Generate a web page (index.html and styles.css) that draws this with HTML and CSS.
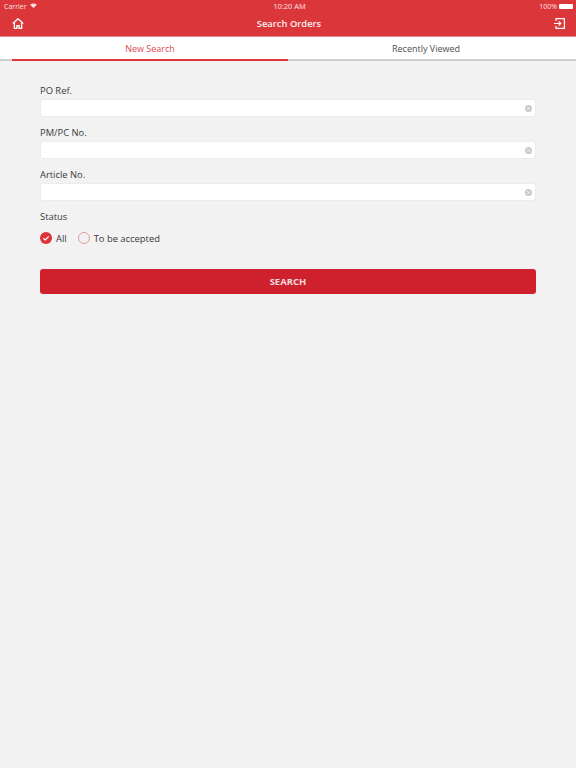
FILE: index.html
```html
<!DOCTYPE html>
<html lang="en">
<head>
<meta charset="utf-8">
<title>Search Orders</title>
<link rel="stylesheet" href="styles.css">
</head>
<body>
<header class="header">
  <div class="statusbar">
    <div class="status-left"><span>Carrier</span>
      <svg class="wifi" width="7" height="5" viewBox="0 0 8 6"><path d="M4 6 0 2.200C2.300 0 5.700 0 8 2.200Z" fill="#fff" fill-opacity=".85"/></svg>
    </div>
    <div class="status-time">10:20 AM</div>
    <div class="status-right"><span>100%</span><span class="battery"></span></div>
  </div>
  <div class="navbar">
    <svg class="nav-icon" width="12" height="11" viewBox="0 0 14 13" fill="none" stroke="#fff" stroke-width="1.600"><path d="M.8 6.600 7 1l6.200 5.600"/><path d="M2.700 5.500v6.700h3V9h2.600v3.200h3V5.500"/></svg>
    <div class="nav-title">Search Orders</div>
    <svg class="nav-icon" width="11" height="11" viewBox="0 0 11 11" fill="none" stroke="#fff" stroke-width="1.200"><path d="M2 3V.6h8.400v9.800H2V8"/><path d="M0 5.500h6.500M4.600 3.300l2.200 2.200-2.200 2.200"/></svg>
  </div>
</header>
<nav class="tabs">
  <div class="tab tab-active">New Search</div>
  <div class="tab">Recently Viewed</div>
</nav>
<main class="form">
  <div class="field">
    <label class="label">PO Ref.</label>
    <div class="input"><svg class="clear" width="7" height="7" viewBox="0 0 7 7"><circle cx="3.500" cy="3.500" r="3.500" fill="#c9c9c9"/><path d="M2.200 2.200l2.600 2.600M4.800 2.200 2.200 4.800" stroke="#fff" stroke-width=".8"/></svg></div>
  </div>
  <div class="field">
    <label class="label">PM/PC No.</label>
    <div class="input"><svg class="clear" width="7" height="7" viewBox="0 0 7 7"><circle cx="3.500" cy="3.500" r="3.500" fill="#c9c9c9"/><path d="M2.200 2.200l2.600 2.600M4.800 2.200 2.200 4.800" stroke="#fff" stroke-width=".8"/></svg></div>
  </div>
  <div class="field">
    <label class="label">Article No.</label>
    <div class="input"><svg class="clear" width="7" height="7" viewBox="0 0 7 7"><circle cx="3.500" cy="3.500" r="3.500" fill="#c9c9c9"/><path d="M2.200 2.200l2.600 2.600M4.800 2.200 2.200 4.800" stroke="#fff" stroke-width=".8"/></svg></div>
  </div>
  <div class="label">Status</div>
  <div class="radios">
    <div class="radio">
      <svg width="12" height="12" viewBox="0 0 12 12"><circle cx="6" cy="6" r="6" fill="#dc3239"/><path d="M3.300 6.200 5.200 8 8.800 4.300" fill="none" stroke="#fff" stroke-width="1.200"/></svg>
      <span>All</span>
    </div>
    <div class="radio">
      <span class="radio-empty"></span>
      <span>To be accepted</span>
    </div>
  </div>
  <button class="search" type="button">SEARCH</button>
</main>
</body>
</html>
```
FILE: styles.css
```css
* { box-sizing: border-box; }
html, body { margin: 0; height: 100%; }
body {
  background: #f2f2f2;
  font-family: "Open Sans", "Noto Sans", sans-serif;
  color: #3c3c3c;
  overflow: hidden;
}
.header { background: #db373b; height: 37px; color: #fff; border-bottom: 1px solid #d98a8c; }
.statusbar {
  height: 12px;
  display: grid;
  grid-template-columns: 1fr auto 1fr;
  align-items: center;
  padding: 1px 3px 0 4px;
  font-size: 7px;
  line-height: 11px;
  color: #fbe3e3;
}
.status-left { display: flex; align-items: center; gap: 3px; }
.wifi { margin-top: -2px; }
.status-time { padding-left: 2px; font-size: 7.500px; }
.status-right { display: flex; align-items: center; justify-content: flex-end; gap: 2px; }
.battery { width: 14px; height: 5px; background: #fff; border-radius: 1px; }
.navbar {
  height: 23px;
  display: flex;
  align-items: center;
  justify-content: space-between;
  padding: 0 11px 0 12px;
}
.nav-icon { flex: none; }
.nav-title { font-size: 9.400px; font-weight: 600; color: #fcecec; }
.tabs {
  display: flex;
  background: #fff;
  height: 24px;
  padding-left: 12px;
  border-bottom: 2px solid #cfcfcf;
}
.tab {
  flex: none;
  width: 276px;
  text-align: center;
  font-size: 9px;
  line-height: 24px;
  color: #4d4d4d;
}
.tab-active { color: #dc4a4f; border-bottom: 2px solid #dc373c; height: 24px; }
.form { padding: 23px 40px 0; }
.field { margin-bottom: 9px; }
.label { display: block; font-size: 9.400px; line-height: 14px; color: #3a3a3a; }
.input {
  margin-top: 1px;
  height: 18px;
  background: #fff;
  border-radius: 3px;
  border: 1px solid #ececec;
  display: flex;
  align-items: center;
  justify-content: flex-end;
  padding-right: 3px;
}
.clear { flex: none; }
.radios { display: flex; gap: 11px; margin-top: 7px; height: 14px; align-items: center; }
.radio { display: flex; align-items: center; gap: 4px; font-size: 9.400px; color: #3a3a3a; }
.radio-empty { width: 12px; height: 12px; border: 1px solid #e49a9d; border-radius: 50%; }
.search {
  display: block;
  width: 100%;
  height: 25px;
  margin-top: 24px;
  background: #cf202d;
  border: 0;
  border-radius: 3px;
  color: #f7dcdc;
  font-family: inherit;
  font-size: 9.500px;
  font-weight: 700;
}
```
